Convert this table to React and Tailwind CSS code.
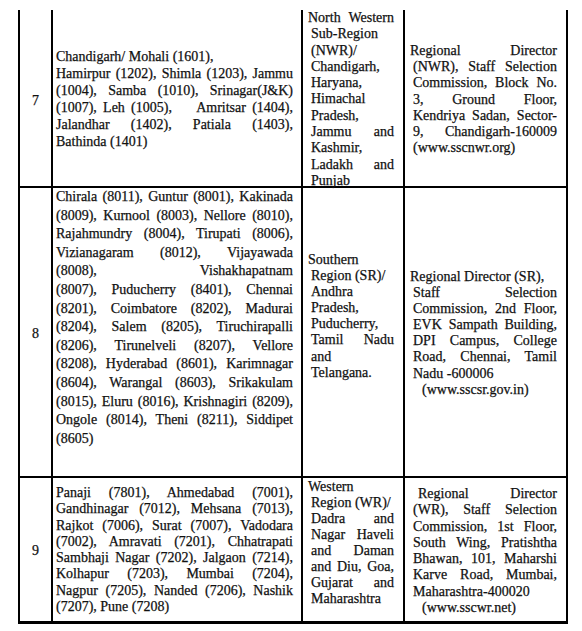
import React from "react";

const J = (t, extra = "") => ({ t, j: true, extra });
const L = (t, extra = "") => ({ t, j: false, extra });

function Lines({ lines }) {
  return lines.map((ln, i) => (
    <div
      key={i}
      className={
        (ln.j ? "text-justify [text-align-last:justify] " : "text-left ") +
        "whitespace-pre " +
        ln.extra
      }
    >
      {ln.t}
    </div>
  ));
}

const rows = [
  {
    h: "h-[178px]",
    num: "7",
    numPad: "pt-[2px]",
    c2: { cls: "pt-[38px] leading-[17px]", lines: [
      L("Chandigarh/ Mohali (1601),"),
      J("Hamirpur (1202), Shimla (1203), Jammu"),
      J("(1004), Samba (1010), Srinagar(J&K)"),
      J("(1007), Leh (1005),    Amritsar (1404),"),
      J("Jalandhar (1402), Patiala (1403),"),
      L("Bathinda (1401)"),
    ]},
    c3: { cls: "pt-0 leading-[16.3px]", lines: [
      J("North Western", "ml-[-3px]"),
      L("Sub-Region"),
      L("(NWR)/"),
      L("Chandigarh,"),
      L("Haryana,"),
      L("Himachal"),
      L("Pradesh,"),
      J("Jammu and"),
      L("Kashmir,"),
      J("Ladakh and"),
      L("Punjab"),
    ]},
    c4: { cls: "pt-[33px] leading-[16.2px]", lines: [
      J("Regional Director", "ml-[-3px]"),
      J("(NWR), Staff Selection"),
      J("Commission, Block No."),
      J("3, Ground Floor,"),
      J("Kendriya Sadan, Sector-"),
      J("9, Chandigarh-160009"),
      L("(www.sscnwr.org)"),
    ]},
  },
  {
    h: "h-[290px]",
    num: "8",
    numPad: "pt-[3px]",
    c2: { cls: "pt-0 leading-[18.6px]", lines: [
      J("Chirala (8011), Guntur (8001), Kakinada"),
      J("(8009), Kurnool (8003), Nellore (8010),"),
      J("Rajahmundry (8004), Tirupati (8006),"),
      J("Vizianagaram (8012), Vijayawada"),
      J("(8008), Vishakhapatnam"),
      J("(8007), Puducherry (8401), Chennai"),
      J("(8201), Coimbatore (8202), Madurai"),
      J("(8204), Salem (8205), Tiruchirapalli"),
      J("(8206), Tirunelveli (8207), Vellore"),
      J("(8208), Hyderabad (8601), Karimnagar"),
      J("(8604), Warangal (8603), Srikakulam"),
      J("(8015), Eluru (8016), Krishnagiri (8209),"),
      J("Ongole (8014), Theni (8211), Siddipet"),
      L("(8605)"),
    ]},
    c3: { cls: "pt-[64px] leading-[16.1px]", lines: [
      L("Southern", "ml-[-3px]"),
      L("Region (SR)/"),
      L("Andhra"),
      L("Pradesh,"),
      L("Puducherry,"),
      J("Tamil Nadu"),
      L("and"),
      L("Telangana."),
    ]},
    c4: { cls: "pt-[81px] leading-[16.1px]", lines: [
      L("Regional Director (SR),", "ml-[-3px]"),
      J("Staff Selection"),
      J("Commission, 2nd Floor,"),
      J("EVK Sampath Building,"),
      J("DPI Campus, College"),
      J("Road, Chennai, Tamil"),
      L("Nadu -600006"),
      L("(www.sscsr.gov.in)", "pl-[9px]"),
    ]},
  },
  {
    h: "h-[143px]",
    num: "9",
    numPad: "pt-[1px]",
    c2: { cls: "pt-[7px] leading-[16.3px]", lines: [
      J("Panaji (7801), Ahmedabad (7001),"),
      J("Gandhinagar (7012), Mehsana (7013),"),
      J("Rajkot (7006), Surat (7007), Vadodara"),
      J("(7002), Amravati (7201), Chhatrapati"),
      J("Sambhaji Nagar (7202), Jalgaon (7214),"),
      J("Kolhapur (7203), Mumbai (7204),"),
      J("Nagpur (7205), Nanded (7206), Nashik"),
      L("(7207), Pune (7208)"),
    ]},
    c3: { cls: "pt-[1px] leading-[16px]", lines: [
      L("Western", "ml-[-3px]"),
      L("Region (WR)/"),
      J("Dadra and"),
      J("Nagar Haveli"),
      J("and Daman"),
      J("and Diu, Goa,"),
      J("Gujarat and"),
      L("Maharashtra"),
    ]},
    c4: { cls: "pt-[8px] leading-[16.3px]", lines: [
      J("Regional Director", "pl-[5px]"),
      J("(WR), Staff Selection"),
      J("Commission, 1st Floor,"),
      J("South Wing, Pratishtha"),
      J("Bhawan, 101, Maharshi"),
      J("Karve Road, Mumbai,"),
      L("Maharashtra-400020"),
      L("(www.sscwr.net)", "pl-[9px]"),
    ]},
  },
];

export default function App() {
  return (
    <div className="w-[582px] h-[631px] bg-white pt-[10px] [font-family:'Liberation_Serif','Times_New_Roman',serif] text-[14px] text-[#111] [-webkit-text-stroke:0.25px_#111] overflow-hidden">
      <div className="ml-[18px] w-[550px] border-x-2 border-b-[3px] border-black">
        {rows.map((r, i) => (
          <div
            key={i}
            className={
              "grid grid-cols-[33px_250px_102px_161px] " +
              r.h +
              (i < rows.length - 1 ? " border-b-2 border-black" : "")
            }
          >
            <div className={"flex items-center justify-center border-r-2 border-black " + r.numPad}>
              {r.num}
            </div>
            <div className={"border-r-2 border-black pl-[3px] pr-[8px] " + r.c2.cls}>
              <Lines lines={r.c2.lines} />
            </div>
            <div className={"border-r-2 border-black pl-[8px] pr-[9px] " + r.c3.cls}>
              <Lines lines={r.c3.lines} />
            </div>
            <div className={"pl-[8px] pr-[9px] " + r.c4.cls}>
              <Lines lines={r.c4.lines} />
            </div>
          </div>
        ))}
      </div>
    </div>
  );
}
